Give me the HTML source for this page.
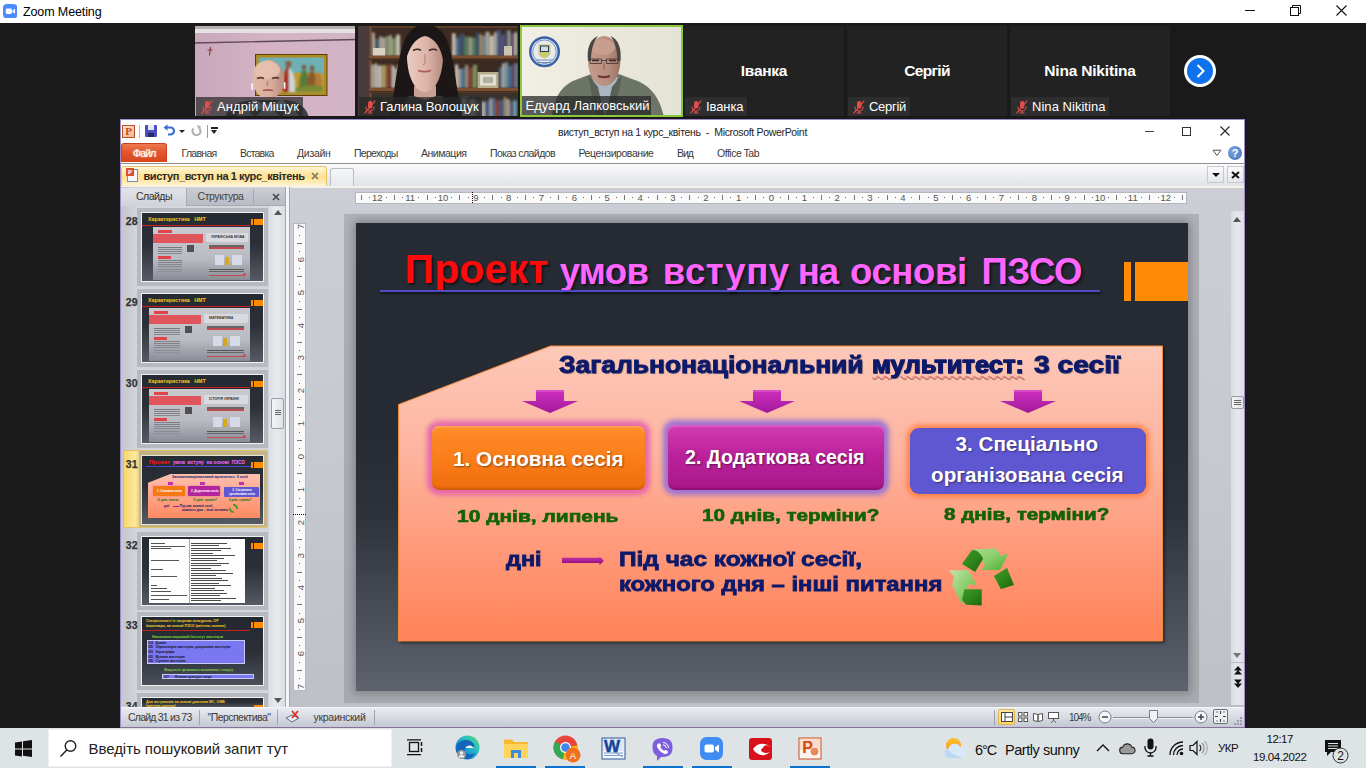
<!DOCTYPE html>
<html lang="uk"><head>
<meta charset="utf-8">
<title>Zoom Meeting</title>
<style>
*{box-sizing:border-box;margin:0;padding:0}
html,body{width:1366px;height:768px;overflow:hidden;background:#1a1a1a;font-family:"Liberation Sans",sans-serif;}
.abs{position:absolute}
#root{position:relative;width:1366px;height:768px;overflow:hidden;background:#1a1a1a}
/* zoom title bar */
#ztitle{left:0;top:0;width:1366px;height:23px;background:#fff}
#ztitle .t{left:23px;top:4.800px;font-size:12.500px;line-height:14px;color:#000;white-space:nowrap}
/* video strip */
.vid{top:26px;width:160px;height:90px;background:#222;overflow:hidden}
.vid .nm{left:0;bottom:0;height:19px;background:rgba(40,40,40,.72);color:#fff;font-size:13px;line-height:19px;padding-left:21px;padding-right:3.500px;white-space:nowrap}
.vid .big{left:0;width:160px;top:35.500px;text-align:center;color:#fff;font-weight:bold;font-size:15.500px;line-height:18px}
.mic{left:4px;top:3px;width:14px;height:14px}
/* ppt */
#ppt{left:120px;top:119px;width:1125px;height:609px;background:#fff;border:1px solid #9d8ac6;overflow:hidden}
/* taskbar */
#task{left:0;top:728px;width:1366px;height:40px;background:#dee3e6}

/* ppt chrome */
.m{top:147px;font-size:10.5px;color:#3b3b3b;white-space:nowrap}
#rib{left:121px;top:120px;width:1123px;height:43px;background:#fff}
#ribline{left:121px;top:163px;width:1123px;height:1px;background:#8e9096}
#tabbar{left:121px;top:164px;width:1123px;height:23px;background:linear-gradient(#fbfbfc,#e9eaee 60%,#e0e2e7)}
#work{left:121px;top:187.500px;width:1123px;height:520.500px;background:linear-gradient(#cbced5,#c6c9d0 50%,#bdc0c6)}
#status{left:121px;top:708px;width:1123px;height:19px;background:linear-gradient(#e9ebf0,#d3d6de 60%,#c4c8d2)}
.st{top:711px;font-size:10.5px;color:#3b3b3b;white-space:nowrap}

.th{left:141px;width:123px;height:70px;border:1px solid #f2f2f4;background:linear-gradient(#252a33 0%,#2a2f38 45%,#555a64 100%);overflow:hidden}
.band{left:137px;width:131px;height:79px;background:#b7b9bf;border-top:1px solid #d6d8dd}
.num{left:121.500px;width:16px;text-align:right;font-size:10.500px;font-weight:bold;color:#333;white-space:nowrap;margin-top:0;-webkit-text-stroke:.25px #333}
.oblk{left:112px;top:6px;width:9px;height:6px;background:#ff8c00}
.oblk2{left:109px;top:6px;width:1.500px;height:6px;background:#ff8c00}
.tt{white-space:nowrap;font-weight:bold}
.rl{top:192px;font-size:9.5px;color:#555;width:20px;text-align:center;line-height:11px}
.vl{left:289.500px;font-size:9.5px;color:#555;width:20px;text-align:center;line-height:11px;transform:rotate(-90deg)}

#slide{left:356px;top:223px;width:832px;height:468px;box-shadow:0 0 9px 2px rgba(70,72,80,.45);background:linear-gradient(#252a33 0%,#262b34 45%,#2c313a 62%,#444953 80%,#5d626d 100%);overflow:hidden}
.ab{font-weight:bold;white-space:nowrap;-webkit-text-stroke:.95px currentColor}
.sb{font-weight:bold;white-space:nowrap}
.btn{border-radius:7px}
.bt{color:#fff;text-shadow:1px 1px 2px rgba(0,0,0,.45)}
</style>
</head>
<body>
<div id="root">
<div id="ztitle" class="abs"><div class="abs t" style="letter-spacing: -0.117px;">Zoom Meeting</div>
<svg class="abs" style="left:2.800px;top:3.700px" width="14.400" height="14.400" viewBox="0 0 29 29"><rect width="29" height="29" rx="8" fill="#4a8cff"></rect><rect x="5.500" y="9" width="12.500" height="11" rx="3" fill="#fff"></rect><path d="M19.200 13l5-3.500v10l-5-3.500z" fill="#fff"></path></svg>
<div class="abs" style="left:1245px;top:10px;width:10px;height:1px;background:#111"></div>
<svg class="abs" style="left:1289.500px;top:4.500px" width="11" height="11" viewBox="0 0 11 11"><path d="M2.500 2.500V.5h8v8h-2" fill="none" stroke="#111" stroke-width="1"></path><rect x=".5" y="2.500" width="8" height="8" fill="none" stroke="#111" stroke-width="1"></rect></svg>
<svg class="abs" style="left:1335.500px;top:4.500px" width="11" height="11" viewBox="0 0 11 11"><path d="M.5.500l10 10M10.500.5l-10 10" stroke="#111" stroke-width="1.100"></path></svg>
</div>


<!-- video 1 -->
<div class="abs vid" style="left:195px">
<svg class="abs" style="left:0;top:0" width="160" height="90" viewBox="0 0 160 90">
<defs><linearGradient id="pw" x1="0" x2="1"><stop offset="0" stop-color="#c9a7ba"></stop><stop offset=".45" stop-color="#d4b3c5"></stop><stop offset="1" stop-color="#d2b4c4"></stop></linearGradient>
<filter id="vb"><feGaussianBlur stdDeviation=".55"></feGaussianBlur></filter><filter id="vb2"><feGaussianBlur stdDeviation=".9"></feGaussianBlur></filter>
<linearGradient id="sk1" x1="0" x2="1"><stop offset="0" stop-color="#e2baa8"></stop><stop offset=".6" stop-color="#d8ac9c"></stop><stop offset="1" stop-color="#b88c7e"></stop></linearGradient></defs>
<g filter="url(#vb)">
<rect x="-2" y="-2" width="164" height="94" fill="url(#pw)"></rect>
<rect x="-2" y="-2" width="164" height="5.500" fill="#b4b0b0"></rect><rect x="-2" y="3" width="164" height="4" fill="#e6e2e2"></rect>
<path d="M-2 17L162 13.500" stroke="#5e4a58" stroke-width="1.300"></path>
<path d="M15.500 21l-1 8.500M12.500 24h5" stroke="#7a3a3a" stroke-width="1.100"></path>
<rect x="60" y="28" width="72.500" height="42" fill="#5a4010"></rect>
<rect x="61" y="29" width="70.500" height="40" fill="#b08a20"></rect>
<rect x="63.500" y="31.500" width="65.500" height="35" fill="#6eb0b4"></rect>
<path d="M63.500 50c20-4 45-4 65.500-2v18.500H63.500z" fill="#c09a34"></path>
<g filter="url(#vb2)"><path d="M88 66c-1-10 1-22 5-27 3 4 4 16 3 27z" fill="#a83426"></path><path d="M94 42c5 3 7 14 6 24h-6z" fill="#ccd6da"></path><circle cx="93.500" cy="38" r="3" fill="#8a5a40"></circle>
<path d="M104 64c0-10 2-20 5-21 4 1 5 11 5 21z" fill="#5a7a3a"></path><path d="M112 62c0-8 2-17 5-18 3 1 5 10 5 18z" fill="#8a5a2a"></path><path d="M120 60c0-7 1-13 3-14 3 1 4 7 4 14z" fill="#b87a3a"></path><circle cx="109" cy="41" r="2.200" fill="#7a5038"></circle><circle cx="117" cy="42" r="2.200" fill="#7a5038"></circle><path d="M100 66h28v-6c-8-2-20 0-28 2z" fill="#7a8a30"></path></g>
<path d="M30 92c2-10 12-17 28-18h32c14 1 22 8 24 18z" fill="#3e4048"></path>
<path d="M40 92l10-12 10 12zM60 92l13-14 13 14zM86 92l10-12 10 12z" fill="#8a8e98"></path>
<path d="M60 73l13 9 14-9 6 6-20 8-18-8z" fill="#a8b4c8"></path>
<ellipse cx="73.500" cy="53.500" rx="15.700" ry="19.500" fill="url(#sk1)"></ellipse>
<ellipse cx="72" cy="44" rx="13" ry="9" fill="#e8c4b2" opacity=".8"></ellipse>
<path d="M62 52.500c2-1 5-1 7 0M77 52.500c2-1 5-1 7 0" stroke="#5a3a34" stroke-width="1.500" fill="none"></path>
<path d="M68 64.500c3-.8 7-.8 10 0" stroke="#a05a5a" stroke-width="1.700" fill="none"></path>
<path d="M72.500 55v5" stroke="#b88878" stroke-width="1.600"></path>
<rect x="56.300" y="57" width="1.800" height="7" rx=".9" fill="#f4f4f4"></rect><rect x="88.700" y="56" width="1.800" height="7" rx=".9" fill="#f4f4f4"></rect>
</g></svg>
<div class="abs nm" style="left:1px;width:107px"><svg class="abs mic" viewBox="0 0 14 14"><rect x="5" y="1" width="4.4" height="7.6" rx="2.2" fill="#e04e4c"></rect><path d="M3 6.5v.6a4 4 0 0 0 8 0v-.6" fill="none" stroke="#e04e4c" stroke-width="1.1"></path><path d="M7 11v1.8M4.6 13h4.8" stroke="#e04e4c" stroke-width="1.1"></path><path d="M12.2 0.6L1.6 13.4" stroke="#e04e4c" stroke-width="1.3"></path></svg><span style="letter-spacing: 0.068px;">Андрій Міщук</span></div>
</div>
<!-- video 2 -->
<div class="abs vid" style="left:358px">
<svg class="abs" style="left:0;top:0" width="160" height="90" viewBox="0 0 160 90">
<defs><linearGradient id="fc" x1="0" x2="1"><stop offset="0" stop-color="#ecccc2"></stop><stop offset=".55" stop-color="#dcb4a8"></stop><stop offset="1" stop-color="#b88c80"></stop></linearGradient></defs>
<g filter="url(#vb)">
<rect x="-2" y="-2" width="164" height="94" fill="#5c3c26"></rect>
<rect x="-2" y="-2" width="13" height="94" fill="#4a3a3a"></rect>
<rect x="11" y="-2" width="3" height="94" fill="#6a4428"></rect>
<rect x="14" y="2" width="148" height="28" fill="#3e2c20"></rect>
<rect x="14" y="34" width="148" height="28" fill="#3a2a20"></rect>
<rect x="14" y="67" width="148" height="25" fill="#38302c"></rect>
<g filter="url(#vb2)" opacity=".78">
<rect x="14.0" y="6.4" width="2.6" height="23.6" fill="#e0dccd"></rect><rect x="17.0" y="12.7" width="4.1" height="17.3" fill="#406080"></rect><rect x="21.5" y="10.4" width="2.1" height="19.6" fill="#e8e6dc"></rect><rect x="24.0" y="11.5" width="3.6" height="18.5" fill="#c9c7bd"></rect><rect x="28.0" y="10.1" width="3.1" height="19.9" fill="#8ab070"></rect><rect x="31.5" y="9.1" width="2.1" height="20.9" fill="#e8e6dc"></rect><rect x="34.0" y="12.1" width="3.6" height="17.9" fill="#8ab070"></rect><rect x="38.0" y="8.6" width="4.1" height="21.4" fill="#e8e6dc"></rect><rect x="94.0" y="7.3" width="3.6" height="22.7" fill="#e8e6dc"></rect><rect x="98.0" y="11.6" width="2.6" height="18.4" fill="#4a8ac0"></rect><rect x="101.0" y="8.6" width="2.6" height="21.4" fill="#406080"></rect><rect x="104.0" y="7.4" width="2.1" height="22.6" fill="#406080"></rect><rect x="106.5" y="10.6" width="4.1" height="19.4" fill="#5a9a6a"></rect><rect x="111.0" y="11.2" width="2.6" height="18.8" fill="#c9c7bd"></rect><rect x="114.0" y="11.5" width="3.6" height="18.5" fill="#5a9a6a"></rect><rect x="118.0" y="6.6" width="3.1" height="23.4" fill="#2a5a8a"></rect><rect x="121.5" y="8.3" width="2.6" height="21.7" fill="#c8b070"></rect><rect x="124.5" y="9.6" width="2.6" height="20.4" fill="#7ab0c8"></rect><rect x="127.5" y="5.8" width="4.1" height="24.2" fill="#c9c7bd"></rect><rect x="132.0" y="9.6" width="3.6" height="20.4" fill="#f0eee4"></rect><rect x="136.0" y="6.2" width="2.6" height="23.8" fill="#d8d4c4"></rect><rect x="139.0" y="4.2" width="3.6" height="25.8" fill="#3c6aa6"></rect><rect x="143.0" y="8.7" width="3.6" height="21.3" fill="#6a5a8a"></rect><rect x="147.0" y="4.5" width="2.6" height="25.5" fill="#2a5a8a"></rect><rect x="150.0" y="4.3" width="2.1" height="25.7" fill="#c9c7bd"></rect><rect x="152.5" y="7.4" width="3.6" height="22.6" fill="#6a5a8a"></rect><rect x="156.5" y="6.4" width="2.6" height="23.6" fill="#f0eee4"></rect>
<rect x="13.0" y="38.4" width="3.6" height="23.6" fill="#c9c7bd"></rect><rect x="17.0" y="37.4" width="2.1" height="24.6" fill="#f0eee4"></rect><rect x="19.5" y="39.4" width="4.1" height="22.6" fill="#e8e6dc"></rect><rect x="24.0" y="39.1" width="4.1" height="22.9" fill="#c8b070"></rect><rect x="28.5" y="39.0" width="2.6" height="23.0" fill="#a04a3a"></rect><rect x="31.5" y="37.4" width="2.1" height="24.6" fill="#a04a3a"></rect><rect x="34.0" y="39.7" width="2.6" height="22.3" fill="#f0eee4"></rect><rect x="37.0" y="42.5" width="2.1" height="19.5" fill="#d8d4c4"></rect><rect x="39.5" y="38.8" width="2.1" height="23.2" fill="#e0dccd"></rect><rect x="97.0" y="38.5" width="3.1" height="23.5" fill="#f0eee4"></rect><rect x="100.5" y="43.0" width="2.1" height="19.0" fill="#e0dccd"></rect><rect x="103.0" y="42.3" width="3.6" height="19.7" fill="#4a8ac0"></rect><rect x="107.0" y="38.8" width="3.1" height="23.2" fill="#b0a890"></rect><rect x="110.5" y="41.5" width="4.1" height="20.5" fill="#a04a3a"></rect><rect x="115.0" y="38.7" width="4.1" height="23.3" fill="#8ab070"></rect><rect x="141.0" y="41.4" width="2.6" height="20.6" fill="#4a8ac0"></rect><rect x="144.0" y="37.4" width="2.6" height="24.6" fill="#d8d8d0"></rect><rect x="147.0" y="36.2" width="3.1" height="25.8" fill="#7ab0c8"></rect><rect x="150.5" y="40.0" width="2.6" height="22.0" fill="#4a8ac0"></rect><rect x="153.5" y="38.3" width="3.1" height="23.7" fill="#6a5a8a"></rect><rect x="157.0" y="37.2" width="2.6" height="24.8" fill="#88a0b8"></rect>
<rect x="104.0" y="72.1" width="3.6" height="19.9" fill="#e8e6dc"></rect><rect x="108.0" y="70.6" width="3.1" height="21.4" fill="#406080"></rect><rect x="111.5" y="73.6" width="3.1" height="18.4" fill="#e0dccd"></rect><rect x="115.0" y="73.1" width="2.1" height="18.9" fill="#e0dccd"></rect><rect x="117.5" y="74.9" width="2.1" height="17.1" fill="#5a9a6a"></rect><rect x="120.0" y="75.0" width="3.1" height="17.0" fill="#6a5a8a"></rect><rect x="123.5" y="75.7" width="3.6" height="16.3" fill="#d8d8d0"></rect><rect x="127.5" y="75.1" width="3.6" height="16.9" fill="#3c6aa6"></rect><rect x="131.5" y="72.3" width="2.6" height="19.7" fill="#c9c7bd"></rect><rect x="134.5" y="72.3" width="2.6" height="19.7" fill="#4a8ac0"></rect><rect x="137.5" y="74.5" width="4.1" height="17.5" fill="#a04a3a"></rect><rect x="142.0" y="73.8" width="3.6" height="18.2" fill="#3c6aa6"></rect><rect x="146.0" y="70.9" width="2.1" height="21.1" fill="#c8b070"></rect><rect x="148.5" y="73.1" width="3.1" height="18.9" fill="#c9c7bd"></rect><rect x="152.0" y="75.4" width="2.6" height="16.6" fill="#6a5a8a"></rect><rect x="155.0" y="74.4" width="4.1" height="17.6" fill="#7ab0c8"></rect>
</g>
<rect x="15" y="22" width="12" height="8" fill="#d8d0c0"></rect><rect x="146" y="20" width="8" height="10" fill="#c8c4b0"></rect>
<rect x="119.500" y="46" width="21" height="16" fill="#b8ac8c"></rect><rect x="122" y="48.500" width="16" height="11" fill="#e4e0d0"></rect><rect x="125" y="51" width="10" height="6" fill="#b0b0a0"></rect>
<rect x="11" y="29.500" width="151" height="3" fill="#7a5030"></rect><rect x="11" y="62" width="151" height="3" fill="#7a5030"></rect>
<rect x="11" y="32.500" width="151" height="1.500" fill="#4a2e1a"></rect><rect x="11" y="65" width="151" height="1.500" fill="#4a2e1a"></rect>
<path d="M32 92c4-20 6-50 12-70 4-14 12-24 23-24s20 8 24 22c6 20 8 50 14 72z" fill="#1a1618"></path>
<path d="M50 70h34l10 22H40z" fill="#3a3436"></path>
<path d="M56 60h22v10l-11 4-11-4z" fill="#c8a094"></path>
<path d="M49 30c0-14 6-24 18-24s18 10 18 24c0 16-6 36-18 36s-18-20-18-36z" fill="url(#fc)"></path>
<path d="M48 34c-1-18 6-30 19-30 12 0 20 12 18 30-2-12-8-22-18-24-10 2-16 12-19 24z" fill="#1a1618"></path>
<path d="M55 24.500c3-1.500 6-1.500 8 0M71 24.500c3-1.500 6-1.500 8 0" stroke="#3a2826" stroke-width="1.500" fill="none"></path>
<path d="M60 44.500c4 1.500 9 1.500 13 0" stroke="#b05a5a" stroke-width="1.800" fill="none"></path>
<path d="M67 28v9l-2 2" stroke="#b88a7c" stroke-width="1.200" fill="none"></path>
</g></svg>
<div class="abs nm" style="left:1px;width:123px"><svg class="abs mic" viewBox="0 0 14 14"><rect x="5" y="1" width="4.4" height="7.6" rx="2.2" fill="#e04e4c"></rect><path d="M3 6.5v.6a4 4 0 0 0 8 0v-.6" fill="none" stroke="#e04e4c" stroke-width="1.1"></path><path d="M7 11v1.8M4.6 13h4.8" stroke="#e04e4c" stroke-width="1.1"></path><path d="M12.2 0.6L1.6 13.4" stroke="#e04e4c" stroke-width="1.3"></path></svg><span style="letter-spacing: -0.108px;">Галина Волощук</span></div>
</div>
<!-- video 3 -->
<div class="abs vid" style="left:520px;width:163px;top:25px;height:92px;border:2px solid #8cc83c">
<svg class="abs" style="left:0;top:0" width="159" height="88" viewBox="0 0 159 88">
<defs><linearGradient id="sk3" x1="0" x2="1"><stop offset="0" stop-color="#c49c8a"></stop><stop offset=".6" stop-color="#b88e7e"></stop><stop offset="1" stop-color="#9a7466"></stop></linearGradient>
<linearGradient id="w3" x1="0" x2="1"><stop offset="0" stop-color="#f2efe6"></stop><stop offset=".5" stop-color="#ebe7db"></stop><stop offset="1" stop-color="#e4e4d6"></stop></linearGradient></defs>
<g filter="url(#vb)">
<rect x="-2" y="-2" width="163" height="92" fill="url(#w3)"></rect>
<circle cx="22.500" cy="24.700" r="15.500" fill="#3a62a8"></circle><circle cx="22.500" cy="24.700" r="13" fill="#e6eaf0"></circle><circle cx="22.500" cy="24.700" r="11.800" fill="none" stroke="#5a7ab8" stroke-width=".8"></circle>
<path d="M16.500 17.500h12v8c0 3-3 5-6 6-3-1-6-3-6-6z" fill="#c8cc6a"></path><rect x="18" y="18.500" width="9" height="6.500" fill="#2a3a5a"></rect><rect x="19" y="19.500" width="7" height="4.500" fill="#d8dce0"></rect><path d="M14 33h17M16 35.500h13" stroke="#6a86b8" stroke-width=".9"></path>
<path d="M30 90c2-18 8-32 26-38l16-6h22l16 6c20 6 28 20 32 38z" fill="#6d7468"></path>
<path d="M70 50l13 38 13-38z" fill="#aab6c4"></path>
<path d="M66 48l10 12 6 28h-8zM100 48l-10 12-6 28h8z" fill="#5a6056"></path>
<ellipse cx="82.200" cy="34" rx="16.200" ry="25" fill="url(#sk3)"></ellipse>
<ellipse cx="81" cy="20" rx="12" ry="8" fill="#caa08e" opacity=".9"></ellipse>
<path d="M66 34c-1.500-12 2-22 10-25-5 6-7 15-7 25zM98.400 34c1.500-12-2-22-10-25 5 6 7 15 7 25z" fill="#4a4444"></path>
<path d="M68 32h11.500v4.500H68zM84.500 32H96v4.500H84.500zM79.500 33.500h5" stroke="#4a3c38" stroke-width=".9" fill="none"></path>
<path d="M70 33.500h7M87 33.500h7" stroke="#3a2c28" stroke-width="1.300"></path>
<path d="M76 49c4 1.500 8 1.500 12 0" stroke="#6a3a38" stroke-width="2" fill="none"></path>
<path d="M82 36v7" stroke="#9a7060" stroke-width="1.500"></path>
</g></svg>
<div class="abs nm" style="width:128.500px;padding-left:3.500px;background:rgba(40,40,40,.75)"><span style="letter-spacing: -0.004px;">Едуард Лапковський</span></div>
</div>
<!-- video 4-6 -->
<div class="abs vid" style="left:684px"><div class="abs big"><span style="letter-spacing: -0.25px;">Іванка</span></div><div class="abs nm" style="background:#2e2e2e;left:1px"><svg class="abs mic" viewBox="0 0 14 14"><rect x="5" y="1" width="4.4" height="7.6" rx="2.2" fill="#e04e4c"></rect><path d="M3 6.5v.6a4 4 0 0 0 8 0v-.6" fill="none" stroke="#e04e4c" stroke-width="1.1"></path><path d="M7 11v1.8M4.6 13h4.8" stroke="#e04e4c" stroke-width="1.1"></path><path d="M12.2 0.6L1.6 13.4" stroke="#e04e4c" stroke-width="1.3"></path></svg><span style="letter-spacing: -0.081px;">Іванка</span></div></div>
<div class="abs vid" style="left:847px"><div class="abs big"><span style="letter-spacing: -0.68px;">Сергій</span></div><div class="abs nm" style="background:#2e2e2e;left:1px"><svg class="abs mic" viewBox="0 0 14 14"><rect x="5" y="1" width="4.4" height="7.6" rx="2.2" fill="#e04e4c"></rect><path d="M3 6.5v.6a4 4 0 0 0 8 0v-.6" fill="none" stroke="#e04e4c" stroke-width="1.1"></path><path d="M7 11v1.8M4.6 13h4.8" stroke="#e04e4c" stroke-width="1.1"></path><path d="M12.2 0.6L1.6 13.4" stroke="#e04e4c" stroke-width="1.3"></path></svg><span style="letter-spacing: -0.292px;">Сергій</span></div></div>
<div class="abs vid" style="left:1010px"><div class="abs big"><span style="letter-spacing: -0.184px;">Nina Nikitina</span></div><div class="abs nm" style="background:#2e2e2e;left:1px"><svg class="abs mic" viewBox="0 0 14 14"><rect x="5" y="1" width="4.4" height="7.6" rx="2.2" fill="#e04e4c"></rect><path d="M3 6.5v.6a4 4 0 0 0 8 0v-.6" fill="none" stroke="#e04e4c" stroke-width="1.1"></path><path d="M7 11v1.8M4.6 13h4.8" stroke="#e04e4c" stroke-width="1.1"></path><path d="M12.2 0.6L1.6 13.4" stroke="#e04e4c" stroke-width="1.3"></path></svg><span style="letter-spacing: 0.04px;">Nina Nikitina</span></div></div>
<div class="abs" style="left:1184px;top:55px;width:32px;height:32px;border-radius:50%;background:#fff"></div>
<div class="abs" style="left:1187px;top:58px;width:26px;height:26px;border-radius:50%;background:#0e72ed"><svg class="abs" style="left:0;top:0" width="26" height="26" viewBox="0 0 26 26"><path d="M10.5 7l6 6-6 6" fill="none" stroke="#fff" stroke-width="2"></path></svg></div>


<div id="ppt" class="abs">
</div>

<div id="rib" class="abs"></div>
<!-- quick access -->
<div class="abs" style="left:122px;top:125px;width:13px;height:13px;border:1px solid #b6502a;background:linear-gradient(135deg,#fbe3d3,#f3b48f);font:bold 11px/11px 'Liberation Serif',serif;color:#c64a12;text-align:center">P</div>
<div class="abs" style="left:139px;top:125px;width:1px;height:13px;background:#b9b9b9"></div>
<div class="abs" style="left:145px;top:125px;width:12px;height:12px;background:#4a4fc0;border-radius:1px"><div class="abs" style="left:3px;top:0;width:6px;height:5px;background:#e8e8f4"></div><div class="abs" style="left:3px;top:8px;width:6px;height:4px;background:#222a60"></div></div>
<svg class="abs" style="left:163px;top:124px" width="14" height="14" viewBox="0 0 14 14"><path d="M2 3.5h5.5a3.5 3.5 0 0 1 0 7H5" fill="none" stroke="#3a6fd0" stroke-width="2.2"></path><path d="M0.5 3.5l4-3.3v6.6z" fill="#3a6fd0"></path></svg>
<div class="abs" style="left:179px;top:130px;border:3px solid transparent;border-top:3px solid #222;border-bottom:0"></div>
<svg class="abs" style="left:190px;top:124px" width="13" height="14" viewBox="0 0 13 14"><path d="M3.5 4.5a4 4 0 1 0 6 0" fill="none" stroke="#b0b0b0" stroke-width="2.2"></path><path d="M7.2 0.8l4.2 1.6-3 3z" fill="#b0b0b0"></path></svg>
<div class="abs" style="left:207px;top:125px;width:1px;height:13px;background:#9a9a9a"></div>
<div class="abs" style="left:211px;top:127px;width:7px;height:1.5px;background:#222"></div>
<div class="abs" style="left:211px;top:130px;border:3.5px solid transparent;border-top:4px solid #222;border-bottom:0"></div>
<div class="abs" style="left: 558px; top: 126px; font-size: 10.5px; color: rgb(30, 30, 30); white-space: nowrap; letter-spacing: -0.321px;">виступ_вступ на 1 курс_квітень&nbsp; - &nbsp;Microsoft PowerPoint</div>
<!-- window buttons -->
<div class="abs" style="left:1145px;top:131px;width:9px;height:1px;background:#444"></div>
<div class="abs" style="left:1182px;top:127px;width:9px;height:9px;border:1px solid #333"></div>
<svg class="abs" style="left:1220px;top:126px" width="10" height="10" viewBox="0 0 10 10"><path d="M.5.5l9 9M9.500.5l-9 9" stroke="#222" stroke-width="1.1"></path></svg>
<!-- ribbon tabs -->
<div class="abs" style="left:121px;top:143px;width:46px;height:19px;border-radius:3px 3px 0 0;background:linear-gradient(#ee7a4e,#e2562c 45%,#d8451c);border:1px solid #c6431d;border-bottom:0;color:#fff;font-size:11px;line-height:18px;text-align:center;text-shadow:0 0 2px #ffd0b0"><span style="letter-spacing: -1.137px;">Файл</span></div>
<div class="abs m" style="left: 181.5px; letter-spacing: -0.71px;">Главная</div>
<div class="abs m" style="left: 240px; letter-spacing: -0.79px;">Вставка</div>
<div class="abs m" style="left: 297px; letter-spacing: -0.299px;">Дизайн</div>
<div class="abs m" style="left: 354px; letter-spacing: -0.719px;">Переходы</div>
<div class="abs m" style="left: 421px; letter-spacing: -0.475px;">Анимация</div>
<div class="abs m" style="left: 490px; letter-spacing: -0.561px;">Показ слайдов</div>
<div class="abs m" style="left: 578.5px; letter-spacing: -0.434px;">Рецензирование</div>
<div class="abs m" style="left: 677px; letter-spacing: -1px;">Вид</div>
<div class="abs m" style="left: 717px; letter-spacing: -0.491px;">Office Tab</div>
<svg class="abs" style="left:1212px;top:149px" width="10" height="8" viewBox="0 0 10 8"><path d="M1 1.200h8L5 6.500z" fill="#fff" stroke="#555" stroke-width="1"></path></svg>
<div class="abs" style="left:1228px;top:146px;width:14px;height:14px;border-radius:50%;background:radial-gradient(circle at 40% 35%,#7fa6e0,#3f6fc0);color:#fff;font:bold 11px/14px 'Liberation Sans',sans-serif;text-align:center">?</div>
<div id="ribline" class="abs"></div>
<!-- doc tab bar -->
<div id="tabbar" class="abs"></div>
<div class="abs" style="left:121px;top:166px;width:206px;height:21px;border:1px solid #e6c46a;border-bottom:0;border-radius:3px 3px 0 0;background:linear-gradient(#fff6d8,#ffe08a 50%,#fdf3d2 92%,#fdf8e8)"></div>
<div class="abs" style="left:127px;top:169px;width:11px;height:13px;background:#f3f6fb;border:1px solid #7e8eae"></div>
<div class="abs" style="left:126px;top:168px;width:8px;height:8px;background:#d9512a;color:#fff;font:bold 7px/8px 'Liberation Serif',serif;text-align:center">P</div>
<div class="abs" style="left: 143.5px; top: 170px; font-size: 11px; font-weight: bold; color: rgb(42, 42, 42); white-space: nowrap; letter-spacing: -0.431px;">виступ_вступ на 1 курс_квітень</div>
<svg class="abs" style="left:311px;top:172px" width="8" height="8" viewBox="0 0 8 8"><path d="M1 1l6 6M7 1L1 7" stroke="#7a7468" stroke-width="1.600"></path></svg>
<div class="abs" style="left:330px;top:168px;width:24px;height:19px;border:1px solid #b8bcc6;border-bottom:0;border-radius:3px 3px 0 0;background:linear-gradient(#f6f7f9,#e6e8ee)"></div>
<div class="abs" style="left:1207px;top:166px;width:17px;height:17px;border:1px solid #c5c8cf;background:linear-gradient(#fbfbfc,#e4e6ea)"><div class="abs" style="left:4px;top:6px;border:4px solid transparent;border-top:4px solid #111;border-bottom:0"></div></div>
<div class="abs" style="left:1227px;top:166px;width:17px;height:17px;border:1px solid #c5c8cf;background:linear-gradient(#fbfbfc,#e4e6ea)"><svg class="abs" style="left:3px;top:4px" width="9" height="8" viewBox="0 0 9 8"><path d="M1 1l7 6M8 1L1 7" stroke="#111" stroke-width="2"></path></svg></div>
<div class="abs" style="left:121px;top:185.500px;width:1123px;height:2px;background:#f5f2e9"></div>
<div id="work" class="abs"></div>
<div class="abs" style="left:121px;top:187px;width:165px;height:521px;background:linear-gradient(90deg,#c3c6cd,#d2d5db 10%,#d0d3d9)"></div>
<div class="abs" style="left:121px;top:188px;width:165px;height:18px;background:linear-gradient(#c9ccd3,#b9bcc4);border-bottom:1px solid #a7aab2"></div>
<div class="abs" style="left:121px;top:188px;width:66px;height:18px;background:linear-gradient(#e2e4e9,#cfd2d8);border-right:1px solid #a7aab2"></div>
<div class="abs" style="left: 136px; top: 190px; font-size: 10.5px; color: rgb(51, 51, 51); white-space: nowrap; letter-spacing: -0.516px;">Слайды</div>
<div class="abs" style="left: 197.5px; top: 190px; font-size: 10.5px; color: rgb(68, 68, 68); white-space: nowrap; letter-spacing: -0.425px;">Структура</div>
<div class="abs" style="left:253px;top:189px;width:1px;height:16px;background:#a7aab2"></div>
<svg class="abs" style="left:272px;top:193px" width="8" height="8" viewBox="0 0 8 8"><path d="M1 1l6 6M7 1L1 7" stroke="#444" stroke-width="1.500"></path></svg>
<div class="abs" style="left:269px;top:206px;width:16px;height:502px;background:linear-gradient(90deg,#dcdfe5,#e8eaee 50%,#d9dce2)"></div>
<div class="abs" style="left:273.500px;top:210px;border:4px solid transparent;border-bottom:5px solid #555;border-top:0"></div>
<div class="abs" style="left:273.500px;top:698px;border:4px solid transparent;border-top:5px solid #555;border-bottom:0"></div>
<div class="abs" style="left:271px;top:398px;width:13px;height:31px;border:1px solid #9a9da6;border-radius:2px;background:linear-gradient(90deg,#f4f5f7,#dfe1e6)"><div class="abs" style="left:3px;top:11px;width:6px;height:1px;background:#666;box-shadow:0 2px #666,0 4px #666"></div></div>
<div class="abs" style="left:285px;top:187px;width:5px;height:521px;background:linear-gradient(90deg,#a4a7af 0 1px,#f4f5f7 1px 4px,#a4a7af 4px 5px)"></div>
<div class="abs band" style="top:207px"></div>
<div class="abs num" style="top:215px">28</div>
<div class="abs band" style="top:288px"></div>
<div class="abs num" style="top:296px">29</div>
<div class="abs band" style="top:369px"></div>
<div class="abs num" style="top:377px">30</div>
<div class="abs" style="left:123px;top:450px;width:145px;height:78px;border:1px solid #e2c25c;border-radius:2px;background:linear-gradient(90deg,#f6d86a,#fbe9a0 8%,#e6cf80 10.5%,#bfb184 11%,#c4b68a)"></div>
<div class="abs num" style="top:458px">31</div>
<div class="abs band" style="top:531px"></div>
<div class="abs num" style="top:539px">32</div>
<div class="abs band" style="top:611px"></div>
<div class="abs num" style="top:619px">33</div>
<div class="abs band" style="top:691.500px"></div>
<div class="abs num" style="top:699.500px">34</div>
<div class="abs th" style="top:212px"><div class="abs tt" style="left:6px;top:2.500px;font-size:5.300px;color:#ffc81e">Характеристика &nbsp; НМТ</div><div class="abs" style="left:0;top:12px;width:108px;height:1px;background:#c8201c"></div><div class="abs oblk"></div><div class="abs oblk2"></div><div class="abs" style="left:11px;top:14px;width:97px;height:53px;background:linear-gradient(#c9cacf,#b9bbc2 60%,#8a8d96)"><div class="abs" style="left:0;top:7px;width:50px;height:9px;background:#e0555c"></div><div class="abs" style="left:5px;top:3px;width:14px;height:3px;background:#e0434a"></div><div class="abs" style="left:53px;top:6px;width:42px;height:9px;background:#d9dadf"></div><div class="abs tt" style="left:58px;top:8px;font-size:3.5px;color:#333">УКРАЇНСЬКА МОВА</div><div class="abs" style="left:34px;top:18px;width:7px;height:7px;background:#333;opacity:.8"></div><div class="abs" style="left:5px;top:20px;width:24px;height:1px;background:#777;box-shadow:0 2px #808088,0 4px #808088,0 6px #888890,0 13px #808088,0 15px #808088,0 17px #888890,0 19px #888890,0 22px #8a8a92,0 24px #90909a"></div><div class="abs" style="left:5px;top:29px;width:13px;height:3px;background:#e0434a"></div><div class="abs" style="left:56px;top:18px;width:35px;height:1.500px;background:#666;box-shadow:0 2px #c04a50"></div><div class="abs" style="left:62px;top:28px;width:9px;height:10px;background:#d5dae6"></div><div class="abs" style="left:72px;top:30px;width:4px;height:8px;background:#d6a820"></div><div class="abs" style="left:79px;top:28px;width:10px;height:10px;background:#d5dae6"></div><div class="abs" style="left:56px;top:42px;width:35px;height:1px;background:#555;box-shadow:0 2px #666,0 6px #c04a50"></div><div class="abs" style="left:90px;top:46px;width:3px;height:3px;border-radius:50%;background:#e0434a"></div></div></div>
<div class="abs th" style="top:293px"><div class="abs tt" style="left:6px;top:2.500px;font-size:5.300px;color:#ffc81e">Характеристика &nbsp; НМТ</div><div class="abs" style="left:0;top:12px;width:108px;height:1px;background:#c8201c"></div><div class="abs oblk"></div><div class="abs oblk2"></div><div class="abs" style="left:7px;top:14px;width:101px;height:53px;background:linear-gradient(#c9cacf,#b9bbc2 60%,#8a8d96)"><div class="abs" style="left:0;top:7px;width:52px;height:9px;background:#e0555c"></div><div class="abs" style="left:5px;top:3px;width:14px;height:3px;background:#e0434a"></div><div class="abs" style="left:55px;top:6px;width:44px;height:9px;background:#d9dadf"></div><div class="abs tt" style="left:60px;top:8px;font-size:3.5px;color:#333">МАТЕМАТИКА</div><div class="abs" style="left:36px;top:18px;width:7px;height:7px;background:#333;opacity:.8"></div><div class="abs" style="left:5px;top:20px;width:26px;height:1px;background:#777;box-shadow:0 2px #808088,0 4px #808088,0 6px #888890,0 13px #808088,0 15px #808088,0 17px #888890,0 19px #888890,0 22px #8a8a92,0 24px #90909a"></div><div class="abs" style="left:5px;top:29px;width:13px;height:3px;background:#e0434a"></div><div class="abs" style="left:58px;top:18px;width:37px;height:1.500px;background:#666;box-shadow:0 2px #c04a50"></div><div class="abs" style="left:64px;top:28px;width:9px;height:10px;background:#d5dae6"></div><div class="abs" style="left:74px;top:30px;width:4px;height:8px;background:#d6a820"></div><div class="abs" style="left:81px;top:28px;width:10px;height:10px;background:#d5dae6"></div><div class="abs" style="left:58px;top:42px;width:37px;height:1px;background:#555;box-shadow:0 2px #666,0 6px #c04a50"></div><div class="abs" style="left:94px;top:46px;width:3px;height:3px;border-radius:50%;background:#e0434a"></div></div></div>
<div class="abs th" style="top:374px"><div class="abs tt" style="left:6px;top:2.500px;font-size:5.300px;color:#ffc81e">Характеристика &nbsp; НМТ</div><div class="abs" style="left:0;top:12px;width:108px;height:1px;background:#c8201c"></div><div class="abs oblk"></div><div class="abs oblk2"></div><div class="abs" style="left:7px;top:14px;width:101px;height:53px;background:linear-gradient(#c9cacf,#b9bbc2 60%,#8a8d96)"><div class="abs" style="left:0;top:7px;width:52px;height:9px;background:#e0555c"></div><div class="abs" style="left:5px;top:3px;width:14px;height:3px;background:#e0434a"></div><div class="abs" style="left:55px;top:6px;width:44px;height:9px;background:#d9dadf"></div><div class="abs tt" style="left:60px;top:8px;font-size:3.5px;color:#333">ІСТОРІЯ УКРАЇНИ</div><div class="abs" style="left:36px;top:18px;width:7px;height:7px;background:#333;opacity:.8"></div><div class="abs" style="left:5px;top:20px;width:26px;height:1px;background:#777;box-shadow:0 2px #808088,0 4px #808088,0 6px #888890,0 13px #808088,0 15px #808088,0 17px #888890,0 19px #888890,0 22px #8a8a92,0 24px #90909a"></div><div class="abs" style="left:5px;top:29px;width:13px;height:3px;background:#e0434a"></div><div class="abs" style="left:58px;top:18px;width:37px;height:1.500px;background:#666;box-shadow:0 2px #c04a50"></div><div class="abs" style="left:64px;top:28px;width:9px;height:10px;background:#d5dae6"></div><div class="abs" style="left:74px;top:30px;width:4px;height:8px;background:#d6a820"></div><div class="abs" style="left:81px;top:28px;width:10px;height:10px;background:#d5dae6"></div><div class="abs" style="left:58px;top:42px;width:37px;height:1px;background:#555;box-shadow:0 2px #666,0 6px #c04a50"></div><div class="abs" style="left:94px;top:46px;width:3px;height:3px;border-radius:50%;background:#e0434a"></div></div></div>
<div class="abs th" style="top:455px;border-color:#e8e4d4">
<div class="abs tt" style="left:7px;top:3px;font-size:6px;color:#ff1a1a">Проект <span style="color:#ff66ff;font-size:4.800px">&nbsp;умов &nbsp;вступу &nbsp;на основі &nbsp;ПЗСО</span></div>
<div class="abs" style="left:4px;top:10px;width:105px;height:1px;background:#4a48c8"></div>
<div class="abs oblk" style="top:6px"></div><div class="abs oblk2"></div>
<div class="abs" style="left:6px;top:18px;width:112px;height:44px;background:linear-gradient(#fdc0b0,#ff8a62);clip-path:polygon(0 20%,20% 0,100% 0,100% 100%,0 100%)"></div>
<div class="abs tt" style="left:30px;top:19px;font-size:3.600px;color:#0d1a6a">Загальнонаціональний мультитест: 3 сесії</div>
<div class="abs" style="left:11px;top:30px;width:32px;height:10px;border-radius:1px;background:#f57a14;box-shadow:0 0 1.500px #e060a0"></div>
<div class="abs" style="left:46px;top:30px;width:32px;height:10px;border-radius:1px;background:#b4249a;box-shadow:0 0 1.500px #9060d0"></div>
<div class="abs" style="left:82px;top:30.500px;width:35px;height:10px;border-radius:1px;background:#5f56d0"></div>
<div class="abs tt" style="left:15px;top:33px;font-size:3px;color:#fff">1. Основна сесія</div>
<div class="abs tt" style="left:49px;top:33px;font-size:3px;color:#fff">2. Додаткова сесія</div>
<div class="abs tt" style="left:87px;top:31.500px;font-size:2.800px;color:#fff;line-height:4px;text-align:center">3. Спеціально<br>організована сесія</div>
<div class="abs" style="left:26px;top:26px;width:5px;height:3px;background:#c030b0"></div><div class="abs" style="left:58px;top:26px;width:5px;height:3px;background:#c030b0"></div><div class="abs" style="left:97px;top:26px;width:5px;height:3px;background:#c030b0"></div>
<div class="abs tt" style="left:15px;top:42px;font-size:2.800px;color:#1a6a0a">10 днів, липень</div>
<div class="abs tt" style="left:51px;top:42px;font-size:2.800px;color:#1a6a0a">10 днів, терміни?</div>
<div class="abs tt" style="left:87px;top:42px;font-size:2.800px;color:#1a6a0a">8 днів, терміни?</div>
<div class="abs tt" style="left:22px;top:48px;font-size:3.400px;color:#0d1a6a;line-height:4px">дні &nbsp; &nbsp; &nbsp; &nbsp; &nbsp; Під час кожної сесії,<br>&nbsp; &nbsp; &nbsp; &nbsp; &nbsp; &nbsp; &nbsp; &nbsp; &nbsp; &nbsp;кожного дня – інші питання</div>
<div class="abs" style="left:31px;top:50px;width:6px;height:1px;background:#a020a0"></div>
<div class="abs" style="left:87px;top:48px;width:9px;height:9px;border-radius:50%;border:2px dashed #4a9a30"></div>
</div>
<div class="abs th" style="top:535.500px">
<div class="abs oblk"></div><div class="abs oblk2"></div>
<div class="abs" style="left:7px;top:2px;width:96px;height:64px;background:#fdfdfd;overflow:hidden"><div class="abs" style="left:42px;top:4.0px;width:36px;height:1px;background:#4a4a4a"></div><div class="abs" style="left:42px;top:6.5px;width:28px;height:1px;background:#4a4a4a"></div><div class="abs" style="left:42px;top:9.0px;width:40px;height:1px;background:#4a4a4a"></div><div class="abs" style="left:42px;top:11.5px;width:30px;height:1px;background:#4a4a4a"></div><div class="abs" style="left:42px;top:14.0px;width:22px;height:1px;background:#4a4a4a"></div><div class="abs" style="left:42px;top:16.5px;width:44px;height:1px;background:#4a4a4a"></div><div class="abs" style="left:42px;top:19.0px;width:33px;height:1px;background:#4a4a4a"></div><div class="abs" style="left:42px;top:21.5px;width:26px;height:1px;background:#4a4a4a"></div><div class="abs" style="left:42px;top:24.0px;width:38px;height:1px;background:#4a4a4a"></div><div class="abs" style="left:42px;top:26.5px;width:30px;height:1px;background:#4a4a4a"></div><div class="abs" style="left:42px;top:29.0px;width:20px;height:1px;background:#4a4a4a"></div><div class="abs" style="left:42px;top:31.5px;width:35px;height:1px;background:#4a4a4a"></div><div class="abs" style="left:42px;top:34.0px;width:42px;height:1px;background:#4a4a4a"></div><div class="abs" style="left:42px;top:36.5px;width:25px;height:1px;background:#4a4a4a"></div><div class="abs" style="left:42px;top:39.0px;width:31px;height:1px;background:#4a4a4a"></div><div class="abs" style="left:42px;top:41.5px;width:37px;height:1px;background:#4a4a4a"></div><div class="abs" style="left:42px;top:44.0px;width:28px;height:1px;background:#4a4a4a"></div><div class="abs" style="left:42px;top:46.5px;width:40px;height:1px;background:#4a4a4a"></div><div class="abs" style="left:42px;top:49.0px;width:24px;height:1px;background:#4a4a4a"></div><div class="abs" style="left:42px;top:51.5px;width:33px;height:1px;background:#4a4a4a"></div><div class="abs" style="left:42px;top:54.0px;width:36px;height:1px;background:#4a4a4a"></div><div class="abs" style="left:42px;top:56.5px;width:29px;height:1px;background:#4a4a4a"></div><div class="abs" style="left:42px;top:59.0px;width:45px;height:1px;background:#4a4a4a"></div><div class="abs" style="left:42px;top:61.5px;width:30px;height:1px;background:#4a4a4a"></div><div class="abs" style="left:2px;top:4px;width:14px;height:1px;background:#555"></div><div class="abs" style="left:2px;top:7px;width:34px;height:1px;background:#555"></div><div class="abs" style="left:2px;top:9px;width:20px;height:1px;background:#555"></div><div class="abs" style="left:2px;top:21px;width:28px;height:1px;background:#555"></div><div class="abs" style="left:2px;top:30px;width:12px;height:1px;background:#555"></div><div class="abs" style="left:2px;top:37px;width:26px;height:1px;background:#555"></div><div class="abs" style="left:2px;top:46px;width:6px;height:1px;background:#555"></div><div class="abs" style="left:2px;top:49px;width:16px;height:1px;background:#555"></div><div class="abs" style="left:2px;top:52px;width:20px;height:1px;background:#555"></div><div class="abs" style="left:2px;top:56px;width:36px;height:1px;background:#555"></div><div class="abs" style="left:2px;top:60px;width:18px;height:1px;background:#555"></div><div class="abs" style="left:40px;top:0;width:.5px;height:64px;background:#aaa"></div></div>
</div>
<div class="abs th" style="top:616px;background:linear-gradient(#232830,#2a2f38 50%,#4a4f59)">
<div class="abs tt" style="left:4px;top:2px;font-size:3.600px;line-height:4.500px;color:#ffc81e">Спеціальності із творчим конкурсом, ОР<br>бакалавра, на основі ПЗСО (квітень-липень)</div>
<div class="abs" style="left:0;top:13px;width:108px;height:1px;background:#c8201c"></div>
<div class="abs oblk" style="top:4.500px"></div><div class="abs oblk2" style="top:4.500px"></div>
<div class="abs tt" style="left:10px;top:18px;font-size:3.600px;color:#7ad63a">Навчально-науковий Інститут мистецтв</div>
<div class="abs" style="left:5px;top:23px;width:98px;height:24px;background:#7a78f0;border:.5px solid #c8c8ff"></div>
<div class="abs tt" style="left:6px;top:23.500px;font-size:3px;line-height:4.700px;color:#111">014 &nbsp; Дизайн<br>025 &nbsp; Образотворче мистецтво, декоративне мистецтво<br>023 &nbsp; Хореографія<br>025 &nbsp; Музичне мистецтво<br>026 &nbsp; Сценічне мистецтво</div>
<div class="abs tt" style="left:22px;top:51px;font-size:3.400px;color:#7ad63a">Факультет фізичного виховання і спорту</div>
<div class="abs" style="left:20px;top:57px;width:92px;height:5px;background:#7a78f0;border:.5px solid #c8c8ff"></div>
<div class="abs tt" style="left:22px;top:57.500px;font-size:3px;color:#111">017 &nbsp; &nbsp; &nbsp; Фізична культура і спорт</div>
</div>
<div class="abs th" style="top:696.500px;height:11.500px;border-bottom:0">
<div class="abs tt" style="left:4px;top:2px;font-size:3.600px;line-height:4.500px;color:#ffc81e">Для вступників на основі диплома МС, ОМБ<br>(квітень-липень)</div>
<div class="abs oblk" style="top:7px"></div>
</div>
<div class="abs" style="left:355px;top:192px;width:832px;height:12px;background:#fafafa;border:1px solid #b4b7be"></div>
<div class="abs rl" style="left:367.3px">12</div><div class="abs rl" style="left:400.1px">11</div><div class="abs rl" style="left:433.0px">10</div><div class="abs rl" style="left:465.8px">9</div><div class="abs rl" style="left:498.7px">8</div><div class="abs rl" style="left:531.5px">7</div><div class="abs rl" style="left:564.4px">6</div><div class="abs rl" style="left:597.2px">5</div><div class="abs rl" style="left:630.1px">4</div><div class="abs rl" style="left:663.0px">3</div><div class="abs rl" style="left:695.8px">2</div><div class="abs rl" style="left:728.6px">1</div><div class="abs rl" style="left:761.5px">0</div><div class="abs rl" style="left:794.4px">1</div><div class="abs rl" style="left:827.2px">2</div><div class="abs rl" style="left:860.0px">3</div><div class="abs rl" style="left:892.9px">4</div><div class="abs rl" style="left:925.8px">5</div><div class="abs rl" style="left:958.6px">6</div><div class="abs rl" style="left:991.5px">7</div><div class="abs rl" style="left:1024.3px">8</div><div class="abs rl" style="left:1057.2px">9</div><div class="abs rl" style="left:1090.0px">10</div><div class="abs rl" style="left:1122.8px">11</div><div class="abs rl" style="left:1155.7px">12</div>
<div class="abs" style="left:360.9px;top:195px;width:1px;height:5px;background:#777"></div><div class="abs" style="left:393.7px;top:195px;width:1px;height:5px;background:#777"></div><div class="abs" style="left:426.6px;top:195px;width:1px;height:5px;background:#777"></div><div class="abs" style="left:459.4px;top:195px;width:1px;height:5px;background:#777"></div><div class="abs" style="left:492.3px;top:195px;width:1px;height:5px;background:#777"></div><div class="abs" style="left:525.1px;top:195px;width:1px;height:5px;background:#777"></div><div class="abs" style="left:558.0px;top:195px;width:1px;height:5px;background:#777"></div><div class="abs" style="left:590.8px;top:195px;width:1px;height:5px;background:#777"></div><div class="abs" style="left:623.7px;top:195px;width:1px;height:5px;background:#777"></div><div class="abs" style="left:656.5px;top:195px;width:1px;height:5px;background:#777"></div><div class="abs" style="left:689.4px;top:195px;width:1px;height:5px;background:#777"></div><div class="abs" style="left:722.2px;top:195px;width:1px;height:5px;background:#777"></div><div class="abs" style="left:755.1px;top:195px;width:1px;height:5px;background:#777"></div><div class="abs" style="left:787.9px;top:195px;width:1px;height:5px;background:#777"></div><div class="abs" style="left:820.8px;top:195px;width:1px;height:5px;background:#777"></div><div class="abs" style="left:853.6px;top:195px;width:1px;height:5px;background:#777"></div><div class="abs" style="left:886.5px;top:195px;width:1px;height:5px;background:#777"></div><div class="abs" style="left:919.3px;top:195px;width:1px;height:5px;background:#777"></div><div class="abs" style="left:952.2px;top:195px;width:1px;height:5px;background:#777"></div><div class="abs" style="left:985.0px;top:195px;width:1px;height:5px;background:#777"></div><div class="abs" style="left:1017.9px;top:195px;width:1px;height:5px;background:#777"></div><div class="abs" style="left:1050.7px;top:195px;width:1px;height:5px;background:#777"></div><div class="abs" style="left:1083.6px;top:195px;width:1px;height:5px;background:#777"></div><div class="abs" style="left:1116.4px;top:195px;width:1px;height:5px;background:#777"></div><div class="abs" style="left:1149.3px;top:195px;width:1px;height:5px;background:#777"></div><div class="abs" style="left:1182.1px;top:195px;width:1px;height:5px;background:#777"></div><div class="abs" style="left:369.1px;top:197px;width:1px;height:1px;background:#666"></div><div class="abs" style="left:385.5px;top:197px;width:1px;height:1px;background:#666"></div><div class="abs" style="left:401.9px;top:197px;width:1px;height:1px;background:#666"></div><div class="abs" style="left:418.4px;top:197px;width:1px;height:1px;background:#666"></div><div class="abs" style="left:434.8px;top:197px;width:1px;height:1px;background:#666"></div><div class="abs" style="left:451.2px;top:197px;width:1px;height:1px;background:#666"></div><div class="abs" style="left:467.6px;top:197px;width:1px;height:1px;background:#666"></div><div class="abs" style="left:484.1px;top:197px;width:1px;height:1px;background:#666"></div><div class="abs" style="left:500.5px;top:197px;width:1px;height:1px;background:#666"></div><div class="abs" style="left:516.9px;top:197px;width:1px;height:1px;background:#666"></div><div class="abs" style="left:533.3px;top:197px;width:1px;height:1px;background:#666"></div><div class="abs" style="left:549.8px;top:197px;width:1px;height:1px;background:#666"></div><div class="abs" style="left:566.2px;top:197px;width:1px;height:1px;background:#666"></div><div class="abs" style="left:582.6px;top:197px;width:1px;height:1px;background:#666"></div><div class="abs" style="left:599.0px;top:197px;width:1px;height:1px;background:#666"></div><div class="abs" style="left:615.5px;top:197px;width:1px;height:1px;background:#666"></div><div class="abs" style="left:631.9px;top:197px;width:1px;height:1px;background:#666"></div><div class="abs" style="left:648.3px;top:197px;width:1px;height:1px;background:#666"></div><div class="abs" style="left:664.7px;top:197px;width:1px;height:1px;background:#666"></div><div class="abs" style="left:681.2px;top:197px;width:1px;height:1px;background:#666"></div><div class="abs" style="left:697.6px;top:197px;width:1px;height:1px;background:#666"></div><div class="abs" style="left:714.0px;top:197px;width:1px;height:1px;background:#666"></div><div class="abs" style="left:730.4px;top:197px;width:1px;height:1px;background:#666"></div><div class="abs" style="left:746.9px;top:197px;width:1px;height:1px;background:#666"></div><div class="abs" style="left:763.3px;top:197px;width:1px;height:1px;background:#666"></div><div class="abs" style="left:779.7px;top:197px;width:1px;height:1px;background:#666"></div><div class="abs" style="left:796.1px;top:197px;width:1px;height:1px;background:#666"></div><div class="abs" style="left:812.6px;top:197px;width:1px;height:1px;background:#666"></div><div class="abs" style="left:829.0px;top:197px;width:1px;height:1px;background:#666"></div><div class="abs" style="left:845.4px;top:197px;width:1px;height:1px;background:#666"></div><div class="abs" style="left:861.8px;top:197px;width:1px;height:1px;background:#666"></div><div class="abs" style="left:878.3px;top:197px;width:1px;height:1px;background:#666"></div><div class="abs" style="left:894.7px;top:197px;width:1px;height:1px;background:#666"></div><div class="abs" style="left:911.1px;top:197px;width:1px;height:1px;background:#666"></div><div class="abs" style="left:927.5px;top:197px;width:1px;height:1px;background:#666"></div><div class="abs" style="left:944.0px;top:197px;width:1px;height:1px;background:#666"></div><div class="abs" style="left:960.4px;top:197px;width:1px;height:1px;background:#666"></div><div class="abs" style="left:976.8px;top:197px;width:1px;height:1px;background:#666"></div><div class="abs" style="left:993.2px;top:197px;width:1px;height:1px;background:#666"></div><div class="abs" style="left:1009.7px;top:197px;width:1px;height:1px;background:#666"></div><div class="abs" style="left:1026.1px;top:197px;width:1px;height:1px;background:#666"></div><div class="abs" style="left:1042.5px;top:197px;width:1px;height:1px;background:#666"></div><div class="abs" style="left:1058.9px;top:197px;width:1px;height:1px;background:#666"></div><div class="abs" style="left:1075.4px;top:197px;width:1px;height:1px;background:#666"></div><div class="abs" style="left:1091.8px;top:197px;width:1px;height:1px;background:#666"></div><div class="abs" style="left:1108.2px;top:197px;width:1px;height:1px;background:#666"></div><div class="abs" style="left:1124.6px;top:197px;width:1px;height:1px;background:#666"></div><div class="abs" style="left:1141.1px;top:197px;width:1px;height:1px;background:#666"></div><div class="abs" style="left:1157.5px;top:197px;width:1px;height:1px;background:#666"></div><div class="abs" style="left:1173.9px;top:197px;width:1px;height:1px;background:#666"></div>
<div class="abs" style="left:293px;top:223px;width:13px;height:468px;background:#fafafa;border:1px solid #b4b7be"></div>
<div class="abs vl" style="top:221.0px">7</div><div class="abs vl" style="top:253.9px">6</div><div class="abs vl" style="top:286.8px">5</div><div class="abs vl" style="top:319.6px">4</div><div class="abs vl" style="top:352.4px">3</div><div class="abs vl" style="top:385.3px">2</div><div class="abs vl" style="top:418.1px">1</div><div class="abs vl" style="top:451.0px">0</div><div class="abs vl" style="top:483.9px">1</div><div class="abs vl" style="top:516.7px">2</div><div class="abs vl" style="top:549.5px">3</div><div class="abs vl" style="top:582.4px">4</div><div class="abs vl" style="top:615.2px">5</div><div class="abs vl" style="top:648.1px">6</div><div class="abs vl" style="top:681.0px">7</div><div class="abs" style="left:297px;top:243.0px;width:5px;height:1px;background:#777"></div><div class="abs" style="left:297px;top:275.8px;width:5px;height:1px;background:#777"></div><div class="abs" style="left:297px;top:308.7px;width:5px;height:1px;background:#777"></div><div class="abs" style="left:297px;top:341.5px;width:5px;height:1px;background:#777"></div><div class="abs" style="left:297px;top:374.4px;width:5px;height:1px;background:#777"></div><div class="abs" style="left:297px;top:407.2px;width:5px;height:1px;background:#777"></div><div class="abs" style="left:297px;top:440.1px;width:5px;height:1px;background:#777"></div><div class="abs" style="left:297px;top:472.9px;width:5px;height:1px;background:#777"></div><div class="abs" style="left:297px;top:505.8px;width:5px;height:1px;background:#777"></div><div class="abs" style="left:297px;top:538.6px;width:5px;height:1px;background:#777"></div><div class="abs" style="left:297px;top:571.5px;width:5px;height:1px;background:#777"></div><div class="abs" style="left:297px;top:604.3px;width:5px;height:1px;background:#777"></div><div class="abs" style="left:297px;top:637.2px;width:5px;height:1px;background:#777"></div><div class="abs" style="left:297px;top:670.0px;width:5px;height:1px;background:#777"></div><div class="abs" style="left:299px;top:234.8px;width:1px;height:1px;background:#666"></div><div class="abs" style="left:299px;top:251.2px;width:1px;height:1px;background:#666"></div><div class="abs" style="left:299px;top:267.6px;width:1px;height:1px;background:#666"></div><div class="abs" style="left:299px;top:284.0px;width:1px;height:1px;background:#666"></div><div class="abs" style="left:299px;top:300.5px;width:1px;height:1px;background:#666"></div><div class="abs" style="left:299px;top:316.9px;width:1px;height:1px;background:#666"></div><div class="abs" style="left:299px;top:333.3px;width:1px;height:1px;background:#666"></div><div class="abs" style="left:299px;top:349.7px;width:1px;height:1px;background:#666"></div><div class="abs" style="left:299px;top:366.2px;width:1px;height:1px;background:#666"></div><div class="abs" style="left:299px;top:382.6px;width:1px;height:1px;background:#666"></div><div class="abs" style="left:299px;top:399.0px;width:1px;height:1px;background:#666"></div><div class="abs" style="left:299px;top:415.4px;width:1px;height:1px;background:#666"></div><div class="abs" style="left:299px;top:431.9px;width:1px;height:1px;background:#666"></div><div class="abs" style="left:299px;top:448.3px;width:1px;height:1px;background:#666"></div><div class="abs" style="left:299px;top:464.7px;width:1px;height:1px;background:#666"></div><div class="abs" style="left:299px;top:481.1px;width:1px;height:1px;background:#666"></div><div class="abs" style="left:299px;top:497.6px;width:1px;height:1px;background:#666"></div><div class="abs" style="left:299px;top:514.0px;width:1px;height:1px;background:#666"></div><div class="abs" style="left:299px;top:530.4px;width:1px;height:1px;background:#666"></div><div class="abs" style="left:299px;top:546.8px;width:1px;height:1px;background:#666"></div><div class="abs" style="left:299px;top:563.3px;width:1px;height:1px;background:#666"></div><div class="abs" style="left:299px;top:579.7px;width:1px;height:1px;background:#666"></div><div class="abs" style="left:299px;top:596.1px;width:1px;height:1px;background:#666"></div><div class="abs" style="left:299px;top:612.5px;width:1px;height:1px;background:#666"></div><div class="abs" style="left:299px;top:629.0px;width:1px;height:1px;background:#666"></div><div class="abs" style="left:299px;top:645.4px;width:1px;height:1px;background:#666"></div><div class="abs" style="left:299px;top:661.8px;width:1px;height:1px;background:#666"></div><div class="abs" style="left:299px;top:678.2px;width:1px;height:1px;background:#666"></div>
<div class="abs" style="left:344px;top:214px;width:855px;height:489px;background:linear-gradient(#b0b2b7,#a8aaaf)"></div>
<div class="abs" style="left:1231px;top:211px;width:13px;height:494px;background:linear-gradient(90deg,#d9dce3,#e6e8ee 50%,#dcdfe6)"></div>
<div class="abs" style="left:1233px;top:216.500px;border:4.500px solid transparent;border-bottom:5px solid #555;border-top:0"></div>
<div class="abs" style="left:1233px;top:652.500px;border:4.500px solid transparent;border-top:5px solid #777;border-bottom:0"></div>
<div class="abs" style="left:1231px;top:396px;width:13px;height:13px;border:1px solid #9a9da6;border-radius:2px;background:linear-gradient(90deg,#f4f5f7,#dfe1e6)"><div class="abs" style="left:2px;top:3px;width:7px;height:1px;background:#666;box-shadow:0 2px #666,0 4px #666"></div></div>
<div class="abs" style="left:1230px;top:662px;width:14px;height:1px;background:#b9bcc4"></div>
<svg class="abs" style="left:1233px;top:665px" width="10" height="24" viewBox="0 0 10 24"><path d="M1 5.500L5 1l4 4.500zM1 9.500L5 5l4 4.500zM1 14.500L5 19l4-4.500zM1 18.500L5 23l4-4.500z" fill="#111"></path></svg>
<div class="abs" style="left:472px;top:192px;width:1px;height:12px;background:repeating-linear-gradient(#111 0 1px,transparent 1px 2px)"></div><div class="abs" style="left:293px;top:514px;width:13px;height:1px;background:repeating-linear-gradient(90deg,#111 0 1px,transparent 1px 2px)"></div>
<div id="slide" class="abs">
<div class="abs sb" id="t1" style="left: 48.5px; top: 26px; font-size: 41px; line-height: 41px; color: rgb(255, 10, 10); text-shadow: rgba(0, 0, 0, 0.5) 2px 2px 2px; letter-spacing: 0.172px;">Проект</div>
<div class="abs sb" style="left: 203.7px; top: 31px; font-size: 36.5px; line-height: 36px; color: rgb(255, 102, 255); text-shadow: rgba(0, 0, 0, 0.5) 2px 2px 2px; letter-spacing: -0.645px;">умов</div>
<div class="abs sb" style="left: 306.8px; top: 31px; font-size: 36.5px; line-height: 36px; color: rgb(255, 102, 255); text-shadow: rgba(0, 0, 0, 0.5) 2px 2px 2px; letter-spacing: 0.622px;">вступу</div>
<div class="abs sb" style="left: 441.7px; top: 31px; font-size: 36.5px; line-height: 36px; color: rgb(255, 102, 255); text-shadow: rgba(0, 0, 0, 0.5) 2px 2px 2px; letter-spacing: -0.93px;">на</div>
<div class="abs sb" style="left: 494px; top: 31px; font-size: 36.5px; line-height: 36px; color: rgb(255, 102, 255); text-shadow: rgba(0, 0, 0, 0.5) 2px 2px 2px; letter-spacing: -0.391px;">основі</div>
<div class="abs sb" style="left: 625.5px; top: 31px; font-size: 36.5px; line-height: 36px; color: rgb(255, 102, 255); text-shadow: rgba(0, 0, 0, 0.5) 2px 2px 2px; letter-spacing: -0.387px;">ПЗСО</div>
<div class="abs" style="left:23.5px;top:66.5px;width:720px;height:2.500px;background:#4e4cc4;box-shadow:1px 2px 2px rgba(0,0,0,.6)"></div>
<div class="abs" style="left:767.5px;top:39px;width:7px;height:38.500px;background:#ff8a06"></div>
<div class="abs" style="left:778.5px;top:39px;width:54px;height:38.500px;background:#ff8a06"></div>
<svg class="abs" style="left:0;top:0" width="832" height="468" viewBox="356 223 832 468">
<defs><linearGradient id="pg" x1="0" y1="0" x2="0" y2="1"><stop offset="0" stop-color="#fdc8b8"></stop><stop offset=".35" stop-color="#fdb5a0"></stop><stop offset=".7" stop-color="#ff9878"></stop><stop offset="1" stop-color="#ff8358"></stop></linearGradient>
<filter id="ps" x="-5%" y="-5%" width="110%" height="112%"><feGaussianBlur stdDeviation="1.500"></feGaussianBlur></filter></defs>
<path d="M400 406L552 347.500H1164.500V643H400z" fill="rgba(0,0,0,.55)" filter="url(#ps)"></path>
<path d="M398.500 404.500L550.500 346H1162.500V641H398.500z" fill="url(#pg)" stroke="#f28a3c" stroke-width="1"></path>
</svg>
<div class="abs ab" style="left: 202.7px; top: 127.5px; font-size: 24px; line-height: 28px; color: rgb(13, 26, 106); text-shadow: rgba(0, 0, 0, 0.35) 1px 1px 1px; transform-origin: 0px 50%; transform: scaleX(1.101);">Загальнонаціональний</div>
<div class="abs ab" style="left: 515.8px; top: 127.5px; font-size: 24px; line-height: 28px; color: rgb(13, 26, 106); text-shadow: rgba(0, 0, 0, 0.35) 1px 1px 1px; text-decoration: underline 0.8px wavy rgba(224, 80, 80, 0.6); text-underline-offset: 1.5px; transform-origin: 0px 50%; transform: scaleX(1.0648);">мультитест:</div>
<div class="abs ab" style="left: 678px; top: 127.5px; font-size: 24px; line-height: 28px; color: rgb(13, 26, 106); text-shadow: rgba(0, 0, 0, 0.35) 1px 1px 1px; transform-origin: 0px 50%; transform: scaleX(1.1753);">3 сесії</div>
<svg class="abs" style="left:166px;top:167px" width="56" height="24" viewBox="0 0 56 24"><defs><linearGradient id="ag" x1="0" y1="0" x2="0" y2="1"><stop offset="0" stop-color="#d030c0"></stop><stop offset="1" stop-color="#a0189a"></stop></linearGradient></defs><path d="M14 0h28v11h14L28 23 0 11h14z" fill="url(#ag)"></path><path d="M14 0h28v2H14z" fill="#e060d0" opacity=".6"></path></svg>
<svg class="abs" style="left:383px;top:167px" width="56" height="24" viewBox="0 0 56 24"><defs><linearGradient id="ag" x1="0" y1="0" x2="0" y2="1"><stop offset="0" stop-color="#d030c0"></stop><stop offset="1" stop-color="#a0189a"></stop></linearGradient></defs><path d="M14 0h28v11h14L28 23 0 11h14z" fill="url(#ag)"></path><path d="M14 0h28v2H14z" fill="#e060d0" opacity=".6"></path></svg>
<svg class="abs" style="left:644px;top:167px" width="56" height="24" viewBox="0 0 56 24"><defs><linearGradient id="ag" x1="0" y1="0" x2="0" y2="1"><stop offset="0" stop-color="#d030c0"></stop><stop offset="1" stop-color="#a0189a"></stop></linearGradient></defs><path d="M14 0h28v11h14L28 23 0 11h14z" fill="url(#ag)"></path><path d="M14 0h28v2H14z" fill="#e060d0" opacity=".6"></path></svg>
<div class="abs btn" style="left:75.5px;top:202.5px;width:213.500px;height:64.500px;background:linear-gradient(#ff8c28 0%,#fb7e1a 50%,#ee6c0c 100%);box-shadow:0 0 5px 5px rgba(230,100,172,.95),inset 0 -2px 2px rgba(150,60,0,.35),inset 0 2px 2px rgba(255,190,120,.5)"></div>
<div class="abs sb bt" style="left: 97px; top: 223.8px; font-size: 20.7px; line-height: 24px; letter-spacing: 0.015px;">1. Основна сесія</div>
<div class="abs btn" style="left:312px;top:201.5px;width:215.500px;height:65px;background:linear-gradient(#d23cb2 0%,#bc229c 45%,#a8188a 100%);box-shadow:0 0 5px 5px rgba(152,112,215,.95),inset 0 -2px 2px rgba(90,0,70,.35),inset 0 2px 2px rgba(240,130,220,.5)"></div>
<div class="abs sb bt" style="left: 329px; top: 223.2px; font-size: 19.6px; line-height: 22px; letter-spacing: -0.004px;">2. Додаткова сесія</div>
<div class="abs btn" style="left:553.5px;top:204.5px;width:236.500px;height:66px;border-radius:9px;background:#5f57d2;box-shadow:0 0 5px 3px rgba(255,120,50,.85)"></div>
<div class="abs sb bt" style="left: 599.6px; top: 208.5px; font-size: 20.7px; line-height: 24px; letter-spacing: -0.039px;">3. Спеціально</div>
<div class="abs sb bt" style="left: 575px; top: 240.4px; font-size: 20.7px; line-height: 24px; letter-spacing: 0.044px;">організована сесія</div>
<div class="abs ab" style="left: 101.3px; top: 284px; color: rgb(20, 98, 8); font-size: 17px; line-height: 20px; -webkit-text-stroke-width: 0.65px; transform-origin: 0px 50%; transform: scaleX(1.2327);">10 днів, липень</div>
<div class="abs ab" style="left: 345.6px; top: 282.5px; color: rgb(20, 98, 8); font-size: 17px; line-height: 20px; -webkit-text-stroke-width: 0.65px; transform-origin: 0px 50%; transform: scaleX(1.2179);">10 днів, терміни?</div>
<div class="abs ab" style="left: 587.7px; top: 281.5px; color: rgb(20, 98, 8); font-size: 17px; line-height: 20px; -webkit-text-stroke-width: 0.65px; transform-origin: 0px 50%; transform: scaleX(1.2136);">8 днів, терміни?</div>
<div class="abs ab" style="left: 149.8px; top: 324px; color: rgb(13, 26, 106); font-size: 20px; line-height: 24px; -webkit-text-stroke-width: 0.8px; transform-origin: 0px 50%; transform: scaleX(1.1732);">дні</div>
<svg class="abs" style="left:205.800px;top:332.500px" width="43" height="10" viewBox="0 0 43 10"><defs><linearGradient id="ar2" x1="0" y1="0" x2="0" y2="1"><stop offset="0" stop-color="#c233aa"></stop><stop offset=".45" stop-color="#b0209a"></stop><stop offset="1" stop-color="#7c0a62"></stop></linearGradient></defs><path d="M0 1.800h37.500V.5l4.500 4.200-4.500 4.300V7H0z" fill="url(#ar2)"></path></svg>
<div class="abs ab" style="left: 262.5px; top: 324px; color: rgb(13, 26, 106); font-size: 20px; line-height: 24px; -webkit-text-stroke-width: 0.8px; transform-origin: 0px 50%; transform: scaleX(1.2223);">Під час кожної сесії,</div>
<div class="abs ab" style="left: 262.5px; top: 348.5px; color: rgb(13, 26, 106); font-size: 20px; line-height: 24px; -webkit-text-stroke-width: 0.8px; transform-origin: 0px 50%; transform: scaleX(1.1919);">кожного дня – інші питання</div>
<svg class="abs" style="left:590px;top:323px" width="72" height="64" viewBox="946 546 72 64">
<defs><linearGradient id="rgd" x1="0" y1="0" x2="1" y2="1"><stop offset="0" stop-color="#3f9a24"></stop><stop offset=".5" stop-color="#2f861a"></stop><stop offset="1" stop-color="#1d6410"></stop></linearGradient>
<linearGradient id="rgl" x1="0" y1="0" x2="1" y2="1"><stop offset="0" stop-color="#a8dc8a"></stop><stop offset=".45" stop-color="#8ed070"></stop><stop offset="1" stop-color="#4cae2c"></stop></linearGradient>
<linearGradient id="rgl2" x1="0" y1="0" x2="1" y2="1"><stop offset="0" stop-color="#c4e6b0"></stop><stop offset=".5" stop-color="#8ecf70"></stop><stop offset="1" stop-color="#58b636"></stop></linearGradient></defs>
<path d="M971.900 549.400L996.200 548.400l4.700 7.500 7.500-2.300L1000 570H981.200l3.800-4.700-7.500-13.100z" fill="url(#rgl)"></path>
<path d="M962 563.900l9.900-13.600c4-1.500 9 3.500 11.200 8.400l-8 13.200z" fill="url(#rgd)"></path>
<path d="M993.900 576.100L1007 568.100l7 16.900-13.100 4.200z" fill="url(#rgd)"></path>
<path d="M948.900 570.500l19.200-.5 8.500 15-7.500-1-3.800 8.500-3.300 12.200L952.200 585l1.900-8.400z" fill="url(#rgl2)"></path>
<path d="M964.400 589.200h17.300v16.400l-15.500-.9L962 600z" fill="url(#rgd)"></path>
<circle cx="1019.600" cy="562.300" r=".6" fill="#fff"></circle>
</svg>
</div>
<div id="status" class="abs"></div>
<div class="abs" style="left:120px;top:727px;width:1125px;height:1px;background:#86709c"></div>
<div class="abs" style="left:121px;top:707px;width:1123px;height:1px;background:#f4f5f8"></div>
<div class="abs st" style="left: 128px; letter-spacing: -0.775px;">Слайд 31 из 73</div>
<div class="abs" style="left:199px;top:710px;width:1px;height:15px;background:#9fa3ad"></div>
<div class="abs st" style="left: 207.5px; letter-spacing: -0.55px;">"Перспектива"</div>
<div class="abs" style="left:277px;top:710px;width:1px;height:15px;background:#9fa3ad"></div>
<svg class="abs" style="left:285px;top:710px" width="16" height="14" viewBox="0 0 16 14"><path d="M1 8l6-3 7 3-7 4z" fill="#e8eaf2" stroke="#5a6a9a" stroke-width="1"></path><path d="M7 1l6 7M13 1L7 8" stroke="#e03020" stroke-width="1.800"></path></svg>
<div class="abs st" style="left: 313.5px; letter-spacing: -0.277px;">украинский</div>
<div class="abs" style="left:374px;top:710px;width:1px;height:15px;background:#9fa3ad"></div>
<div class="abs" style="left:994px;top:710px;width:1px;height:15px;background:#9fa3ad"></div>
<div class="abs" style="left:998px;top:709px;width:17px;height:16px;border:1px solid #e3b84a;border-radius:2px;background:linear-gradient(#fde9a8,#fbd46a)"></div>
<svg class="abs" style="left:1001px;top:712px" width="12" height="10" viewBox="0 0 12 10"><rect x=".5" y=".5" width="11" height="9" fill="#fff" stroke="#444"></rect><path d="M4 .5v9M4 5h7.500" stroke="#444" fill="none"></path></svg>
<svg class="abs" style="left:1018px;top:712px" width="10" height="10" viewBox="0 0 10 10"><g fill="#fff" stroke="#555" stroke-width="1"><rect x=".5" y=".5" width="3.500" height="3.500"></rect><rect x="6" y=".5" width="3.500" height="3.500"></rect><rect x=".5" y="6" width="3.500" height="3.500"></rect><rect x="6" y="6" width="3.500" height="3.500"></rect></g></svg>
<svg class="abs" style="left:1033px;top:712px" width="10" height="10" viewBox="0 0 10 10"><path d="M.5 1.500l4.500 1v7l-4.500-1zM9.500 1.500l-4.500 1v7l4.500-1z" fill="#fff" stroke="#555" stroke-width="1"></path></svg>
<svg class="abs" style="left:1048px;top:712px" width="11" height="11" viewBox="0 0 11 11"><rect x=".5" y=".5" width="10" height="6" fill="#fff" stroke="#555"></rect><path d="M5.500 6.500v2M3 10.500l2.500-2 2.500 2" stroke="#555" fill="none"></path></svg>
<div class="abs st" style="left: 1069px; font-size: 10px; top: 712px; letter-spacing: -1.02px;">104%</div>
<svg class="abs" style="left:1097.5px;top:710px" width="14" height="14" viewBox="0 0 14 14"><circle cx="7" cy="7" r="6" fill="#f4f5f8" stroke="#7a7e88"></circle><path d="M4 7h6" stroke="#444" stroke-width="1.500"></path></svg>
<svg class="abs" style="left:1193.5px;top:710px" width="14" height="14" viewBox="0 0 14 14"><circle cx="7" cy="7" r="6" fill="#f4f5f8" stroke="#7a7e88"></circle><path d="M4 7h6M7 4v6" stroke="#444" stroke-width="1.500"></path></svg>
<div class="abs" style="left:1113px;top:716.500px;width:80px;height:1px;background:#8a8e98;box-shadow:0 1px #f0f1f4"></div>
<svg class="abs" style="left:1149px;top:710px" width="9" height="13" viewBox="0 0 9 13"><path d="M.5.5h8v8L4.500 12.500.5 8.500z" fill="#f2f3f6" stroke="#7a7e88"></path></svg>
<svg class="abs" style="left:1213px;top:709px" width="15" height="15" viewBox="0 0 15 15"><rect x=".5" y=".5" width="14" height="14" rx="1.500" fill="#eef0f4" stroke="#6a6e78"></rect><path d="M7.500 2v3M7.500 10v3M2 7.500h3M10 7.500h3" stroke="#444" stroke-width="1.200"></path><path d="M3 3h2M10 3h2M3 12h2M10 12h2" stroke="#777" stroke-width="1"></path></svg>
<svg class="abs" style="left:1234px;top:717px" width="9" height="9" viewBox="0 0 9 9"><g fill="#9a9da8"><rect x="6" y="0" width="2" height="2"></rect><rect x="3" y="3" width="2" height="2"></rect><rect x="6" y="3" width="2" height="2"></rect><rect x="0" y="6" width="2" height="2"></rect><rect x="3" y="6" width="2" height="2"></rect><rect x="6" y="6" width="2" height="2"></rect></g></svg>


<div id="task" class="abs">
<svg class="abs" style="left:15px;top:12px" width="17" height="17" viewBox="0 0 17 17"><path d="M0 2.400l7-1v7H0zM8 1.300L17 0v8.400H8zM0 9.400h7v7l-7-1zM8 9.400h9V17l-9-1.300z" fill="#111"></path></svg>
<div class="abs" style="left:48px;top:1px;width:344px;height:38px;background:#fff;border:1px solid #eef1f1"></div>
<svg class="abs" style="left:59px;top:11px" width="19" height="19" viewBox="0 0 19 19"><circle cx="11.500" cy="7" r="5.300" fill="none" stroke="#222" stroke-width="1.400"></circle><path d="M7.800 11L1.500 17.500" stroke="#222" stroke-width="1.500"></path></svg>
<div class="abs" style="left: 88.5px; top: 12px; font-size: 15px; line-height: 18px; color: rgb(34, 34, 34); white-space: nowrap; letter-spacing: -0.052px;">Введіть пошуковий запит тут</div>
<svg class="abs" style="left:407px;top:11px" width="18" height="17" viewBox="0 0 18 17"><g fill="none" stroke="#111" stroke-width="1.300"><rect x="2.500" y="3.500" width="9" height="9"></rect><path d="M0 .8h14M0 15.600h14"></path></g><path d="M14.500 3v4M14.500 9v4" stroke="#111" stroke-width="1.500"></path></svg>
<svg class="abs" style="left:454px;top:7px" width="26" height="26" viewBox="0 0 26 26"><defs><linearGradient id="eg" x1="1" y1="0" x2="0" y2="1"><stop offset="0" stop-color="#5fd86a"></stop><stop offset=".35" stop-color="#2cc0c0"></stop><stop offset=".7" stop-color="#1b88d8"></stop><stop offset="1" stop-color="#0c4a9c"></stop></linearGradient></defs><circle cx="13.500" cy="12.500" r="12" fill="url(#eg)"></circle><path d="M3 18c-3-8 3-14 10-13 5 .5 8 4 7.500 8h-8c-1.500 0-2.500 1.500-1.500 3.500 1.500 3 6 3.500 10 1.500-2 5-9 8-14 4-2-1.500-3.500-3-4-4z" fill="#1565b8"></path><path d="M11.500 13c1-2.500 4-3 6-2 1.500 1 2.500 1.500 3 2h-8z" fill="#e6f4f8"></path><circle cx="7.500" cy="19.500" r="4.500" fill="#9a9a9a"></circle><circle cx="7.500" cy="18" r="1.700" fill="#ececec"></circle><path d="M4.500 22.500c0-3.300 6-3.300 6 0z" fill="#ececec"></path></svg>
<svg class="abs" style="left:504px;top:9px" width="24" height="21" viewBox="0 0 24 21"><path d="M0 2.500h8l2 2.500h14v16H0z" fill="#f6b92e"></path><path d="M0 7h24v14H0z" fill="#ffd45c"></path><path d="M7 13h10v8H7z" fill="#3b8ade"></path><path d="M10 16h4v5h-4z" fill="#ffd45c"></path></svg>
<svg class="abs" style="left:553px;top:7px" width="28" height="28" viewBox="0 0 28 28"><circle cx="12.500" cy="12.500" r="12" fill="#e8453c"></circle><path d="M12.500 12.500L2.200 6.300A12 12 0 0 0 10 24.200z" fill="#34a853"></path><path d="M12.500 12.500L10 24.200A12 12 0 0 0 24.400 10.500z" fill="#fbbc05"></path><circle cx="12.500" cy="12.500" r="5.500" fill="#fff"></circle><circle cx="12.500" cy="12.500" r="4.300" fill="#4285f4"></circle><circle cx="20" cy="20" r="7.500" fill="#f2711c"></circle><text x="20" y="23.500" text-anchor="middle" font-family="Liberation Sans,sans-serif" font-size="9.500" fill="#fff">A</text></svg>
<svg class="abs" style="left:601px;top:9px" width="25" height="23" viewBox="0 0 25 23"><rect x="1" y="1" width="23" height="21" fill="#f4f7fc" stroke="#2a5699"></rect><rect x="2" y="2" width="21" height="12" fill="#dfe9f7"></rect><path d="M3 16h19M3 18.500h19M12 14l10 6" stroke="#7a9fd6" stroke-width="1"></path><text x="11" y="14.500" text-anchor="middle" font-family="Liberation Sans,sans-serif" font-weight="bold" font-size="17" fill="#17469a" stroke="#17469a" stroke-width=".5">W</text></svg>
<svg class="abs" style="left:651px;top:9px" width="23" height="25" viewBox="0 0 23 25"><path d="M11.500 1C4 1 1.500 4.500 1.500 10.500c0 4 1.500 7 4.500 8.500V24l4-4h1.500c7.500 0 10-3.500 10-9.500S19 1 11.500 1z" fill="#7d5fdd"></path><path d="M7.500 6.500c1-.8 2 .5 2.500 1.500s-.8 1.500-.5 2.300c.6 1.500 2 2.800 3.500 3.400.8.300 1.300-1 2.300-.5s2.300 1.500 1.500 2.500c-.8 1.200-2.300 1.500-3.600 1-3.500-1.400-6-4-7.200-7.200-.4-1.200.5-2.400 1.500-3z" fill="#fff"></path><path d="M12 5.500a5.500 5.500 0 0 1 5.500 5.500M12 7.800a3.300 3.300 0 0 1 3.300 3.300" stroke="#fff" stroke-width="1" fill="none"></path></svg>
<svg class="abs" style="left:700px;top:9px" width="23" height="23" viewBox="0 0 23 23"><rect width="23" height="23" rx="6.500" fill="#3f8cf4"></rect><rect x="4.500" y="7.500" width="9.500" height="8" rx="2" fill="#fff"></rect><path d="M15 10.200l4-2.700v8l-4-2.700z" fill="#fff"></path></svg>
<svg class="abs" style="left:749px;top:10px" width="23" height="22" viewBox="0 0 23 22"><rect width="23" height="22" rx="3" fill="#d8121c"></rect><path d="M4 11c4-6 12-7 17-2-4-1-8 0-9 3 1 3 5 4 9 2-5 5-13 4-17-3z" fill="#fff"></path><circle cx="17.500" cy="10.500" r="3.200" fill="#d8121c"></circle></svg>
<svg class="abs" style="left:798px;top:9px" width="24" height="23" viewBox="0 0 24 23"><rect x="1" y="1" width="22" height="21" fill="#fdf4ee" stroke="#c94f1e"></rect><rect x="2" y="2" width="20" height="11" fill="#fadccb"></rect><circle cx="16.500" cy="14.500" r="4.500" fill="#e88a5e" stroke="#fff"></circle><text x="9.500" y="16" text-anchor="middle" font-family="Liberation Sans,sans-serif" font-weight="bold" font-size="16" fill="#cf4a15">P</text></svg>
<div class="abs" style="left:496px;top:38px;width:40px;height:2px;background:#0a74d0"></div>
<div class="abs" style="left:545px;top:38px;width:40px;height:2px;background:#0a74d0"></div>
<div class="abs" style="left:643px;top:38px;width:40px;height:2px;background:#0a74d0"></div>
<div class="abs" style="left:692px;top:38px;width:40px;height:2px;background:#0a74d0"></div>
<div class="abs" style="left:790px;top:38px;width:40px;height:2px;background:#0a74d0"></div>
<svg class="abs" style="left:943px;top:9px" width="24" height="22" viewBox="0 0 24 22"><defs><linearGradient id="sg" x1="0" y1="0" x2="0" y2="1"><stop offset="0" stop-color="#fbc02a"></stop><stop offset="1" stop-color="#f59a1c"></stop></linearGradient></defs><circle cx="10.500" cy="8.500" r="7.500" fill="url(#sg)"></circle><path d="M6 21a4.800 4.800 0 0 1-.5-9.500 6.500 6.500 0 0 1 12-1.200A5.400 5.400 0 0 1 18.500 21z" fill="#d6e8fa"></path><path d="M6 21a4.800 4.800 0 0 1-1.500-9.200c2 4.500 8 6.500 15.500 9.200z" fill="#b4d2f2" opacity=".8"></path></svg>
<div class="abs" style="left: 975px; top: 12.5px; font-size: 14.5px; line-height: 18px; color: rgb(17, 17, 17); white-space: nowrap; letter-spacing: -1.115px;">6°C</div>
<div class="abs" style="left: 1005px; top: 12.5px; font-size: 14.5px; line-height: 18px; color: rgb(17, 17, 17); white-space: nowrap; letter-spacing: -0.45px;">Partly sunny</div>
<svg class="abs" style="left:1096px;top:16px" width="14" height="8" viewBox="0 0 14 8"><path d="M1 7l6-6 6 6" fill="none" stroke="#111" stroke-width="1.400"></path></svg>
<svg class="abs" style="left:1118.500px;top:15px" width="17" height="12" viewBox="0 0 18 12"><path d="M4.500 11a3.500 3.500 0 0 1-.5-7A5 5 0 0 1 13.500 4 3.500 3.500 0 0 1 13.500 11z" fill="#9a9a9a" stroke="#222" stroke-width="1.100"></path></svg>
<svg class="abs" style="left:1144px;top:10px" width="13" height="19" viewBox="0 0 13 19"><rect x="3.500" y=".5" width="6" height="11" rx="3" fill="#111"></rect><path d="M1 8v1.500a5.500 5.500 0 0 0 11 0V8" fill="none" stroke="#111" stroke-width="1.300"></path><path d="M6.500 15v3M3.500 18h6" stroke="#111" stroke-width="1.300"></path></svg>
<svg class="abs" style="left:1169px;top:13px" width="15" height="15" viewBox="0 0 15 15"><g fill="none" stroke="#111" stroke-width="1.300"><path d="M1 14A13 13 0 0 1 14 1"></path><path d="M4.500 14A9.500 9.500 0 0 1 14 4.500"></path><path d="M8 14a6 6 0 0 1 6-6"></path></g><circle cx="12.500" cy="12.500" r="1.800" fill="#111"></circle></svg>
<svg class="abs" style="left:1189px;top:12px" width="19" height="16" viewBox="0 0 19 16"><path d="M1 5.500h3l4-4v13l-4-4H1z" fill="none" stroke="#111" stroke-width="1.200"></path><path d="M10.500 5a4 4 0 0 1 0 6" fill="none" stroke="#222" stroke-width="1.100"></path><path d="M13 3a7 7 0 0 1 0 10" fill="none" stroke="#888" stroke-width="1.100"></path><path d="M15.500 1a10 10 0 0 1 0 14" fill="none" stroke="#aaa" stroke-width="1.100"></path></svg>
<div class="abs" style="left: 1218px; top: 13px; font-size: 11.5px; line-height: 14px; color: rgb(17, 17, 17); white-space: nowrap; letter-spacing: -0.563px;">УКР</div>
<div class="abs" style="left: 1266.5px; top: 4px; font-size: 11.5px; line-height: 14px; color: rgb(17, 17, 17); white-space: nowrap; letter-spacing: -0.456px;">12:17</div>
<div class="abs" style="left: 1253px; top: 22px; font-size: 11.5px; line-height: 14px; color: rgb(17, 17, 17); white-space: nowrap; letter-spacing: -0.396px;">19.04.2022</div>
<svg class="abs" style="left:1324px;top:11px" width="26" height="26" viewBox="0 0 26 26"><path d="M1 1h16v12H7l-4 4v-4H1z" fill="#111"></path><path d="M4 4.500h10M4 7h10M4 9.500h10" stroke="#dee3e6" stroke-width="1"></path><circle cx="16.500" cy="16.500" r="7.500" fill="#dee3e6" stroke="#333" stroke-width="1"></circle><text x="16.500" y="21" text-anchor="middle" font-family="Liberation Sans,sans-serif" font-size="12" fill="#111">2</text></svg>
</div>
</div>


</body></html>
